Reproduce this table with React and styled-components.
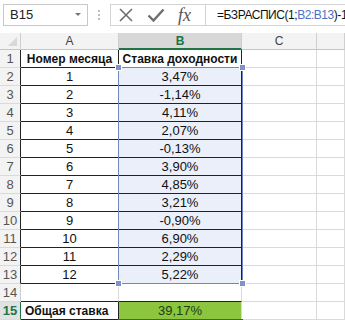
import React from 'react';
import styled, { createGlobalStyle } from 'styled-components';

const GlobalStyle = createGlobalStyle`
  html, body {
    margin: 0;
    padding: 0;
    background: #fff;
    overflow: hidden;
  }
  body {
    font-family: "Liberation Sans", Arial, sans-serif;
  }
`;

const Page = styled.div`
  width: 345px;
  height: 320px;
  overflow: hidden;
`;

const FormulaBar = styled.div`
  display: flex;
  align-items: center;
  height: 28px;
  padding: 2px 0 1px 3px;
  box-sizing: border-box;
`;

const NameBox = styled.div`
  display: flex;
  align-items: center;
  justify-content: space-between;
  width: 85px;
  height: 22px;
  box-sizing: border-box;
  border: 1px solid #c8c8c8;
  padding: 0 6px 0 6px;
  font-size: 13px;
  color: #222;
`;

const Caret = styled.span`
  width: 0;
  height: 0;
  border-left: 3px solid transparent;
  border-right: 3px solid transparent;
  border-top: 3px solid #777;
`;

const Dots = styled.div`
  display: flex;
  flex-direction: column;
  gap: 2px;
  margin: 0 10px 0 10px;
  span {
    width: 2px;
    height: 2px;
    background: #bdbdbd;
  }
`;

const ButtonGroup = styled.div`
  display: flex;
  align-items: center;
  gap: 13px;
  height: 22px;
  box-sizing: border-box;
  border: 1px solid #d4d4d4;
  border-right: none;
  padding: 0 8px 0 7px;
  width: 95px;
`;

const Fx = styled.span`
  font-family: "Liberation Serif", "Times New Roman", serif;
  font-style: italic;
  font-size: 18px;
  color: #555;
  line-height: 1;
`;

const FormulaInput = styled.div`
  flex: 1;
  min-width: 0;
  height: 22px;
  box-sizing: border-box;
  border: 1px solid #d4d4d4;
  border-right: none;
  display: flex;
  align-items: center;
  padding-left: 11px;
  font-size: 12px;
  letter-spacing: -0.45px;
  color: #111;
  white-space: nowrap;
  overflow: hidden;
`;

const Ref = styled.span`
  color: #4a72c4;
`;

const Sheet = styled.div`
  position: relative;
  margin-top: 5px;
  display: grid;
  grid-template-columns: 21px 98px 123px 75px 1fr;
  grid-template-rows: 17px repeat(15, 18px);
`;

const Cell = styled.div`
  box-sizing: border-box;
  display: flex;
  align-items: center;
  justify-content: ${(p) => p.$align || 'center'};
  padding: 0 ${(p) => (p.$align === 'flex-start' ? '4px' : '0')};
  font-size: ${(p) => (p.$bold ? '12px' : '13px')};
  font-weight: ${(p) => (p.$bold ? 700 : 400)};
  color: ${(p) => p.$color || '#111'};
  background: ${(p) => p.$bg || '#fff'};
  border-right: 1px solid ${(p) => p.$right || '#dadada'};
  border-bottom: 1px solid ${(p) => p.$bottom || '#dadada'};
  white-space: nowrap;
  overflow: hidden;
`;

const ColHead = styled.div`
  box-sizing: border-box;
  display: flex;
  align-items: center;
  justify-content: center;
  font-size: 12px;
  color: ${(p) => (p.$active ? '#217346' : '#444')};
  font-weight: ${(p) => (p.$active ? 700 : 400)};
  background: ${(p) => (p.$active ? '#d8d8d8' : '#f3f3f3')};
  border-right: 1px solid #cfcfcf;
  border-bottom: ${(p) => (p.$active ? '2px solid #217346' : '1px solid #c4c4c4')};
`;

const Corner = styled.div`
  position: relative;
  background: #f3f3f3;
  box-sizing: border-box;
  border-right: 1px solid #cfcfcf;
  border-bottom: 1px solid #c4c4c4;
  &::after {
    content: '';
    position: absolute;
    right: 3px;
    bottom: 3px;
    border-left: 9px solid transparent;
    border-bottom: 9px solid #d8d8d8;
  }
`;

const RowHead = styled.div`
  box-sizing: border-box;
  display: flex;
  align-items: center;
  justify-content: center;
  font-size: 13px;
  color: ${(p) => (p.$active ? '#217346' : '#555')};
  font-weight: ${(p) => (p.$active ? 700 : 400)};
  background: ${(p) => (p.$active ? '#e1e1e1' : '#f3f3f3')};
  border-right: 1px solid ${(p) => (p.$active ? '#217346' : p.$edge ? '#222' : '#cfcfcf')};
  border-bottom: 1px solid #dadada;
`;

const Selection = styled.div`
  position: absolute;
  left: 118px;
  top: 34px;
  width: 125px;
  height: 217px;
  box-sizing: border-box;
  border: 1px solid #6f88c4;
  pointer-events: none;
`;

const Handle = styled.span`
  position: absolute;
  width: 5px;
  height: 5px;
  background: #7d93c9;
  border: 1px solid #fff;
  ${(p) => (p.$top ? 'top: -4px;' : 'bottom: -4px;')}
  ${(p) => (p.$left ? 'left: -4px;' : 'right: -4px;')}
`;

const Active = styled.div`
  position: absolute;
  left: 118px;
  top: 286px;
  width: 125px;
  height: 20px;
  box-sizing: border-box;
  border: 2px solid #217346;
  pointer-events: none;
  &::after {
    content: '';
    position: absolute;
    right: -4px;
    bottom: -4px;
    width: 5px;
    height: 5px;
    background: #217346;
    border: 1px solid #fff;
  }
`;

const rates = ['3,47%', '-1,14%', '4,11%', '2,07%', '-0,13%', '3,90%', '4,85%', '3,21%', '-0,90%', '6,90%', '2,29%', '5,22%'];

const XIcon = () => (
  <svg width="16" height="16" viewBox="0 0 16 16">
    <path d="M2 2 L14 14 M14 2 L2 14" stroke="#6e6e6e" strokeWidth="1.6" fill="none" />
  </svg>
);

const CheckIcon = () => (
  <svg width="18" height="16" viewBox="0 0 18 16">
    <path d="M1.5 8.5 L6.5 13.5 L16.5 2.5" stroke="#6e6e6e" strokeWidth="2.4" fill="none" />
  </svg>
);

export default function App() {
  return (
    <Page>
      <GlobalStyle />
      <FormulaBar>
        <NameBox>
          B15
          <Caret />
        </NameBox>
        <Dots>
          <span />
          <span />
          <span />
        </Dots>
        <ButtonGroup>
          <XIcon />
          <CheckIcon />
          <Fx>fx</Fx>
        </ButtonGroup>
        <FormulaInput>
          =БЗРАСПИС(1;<Ref>B2:B13</Ref>)-1
        </FormulaInput>
      </FormulaBar>

      <Sheet>
        <Corner />
        <ColHead>A</ColHead>
        <ColHead $active>B</ColHead>
        <ColHead>C</ColHead>
        <ColHead />

        <RowHead $edge>1</RowHead>
        <Cell $bold $bottom="#222" $right="#222">Номер месяца</Cell>
        <Cell $bold $bottom="#222" $right="#222">Ставка доходности</Cell>
        <Cell />
        <Cell />

        {rates.map((r, i) => (
          <React.Fragment key={i}>
            <RowHead $edge>{i + 2}</RowHead>
            <Cell $bottom="#222" $right="#222">{i + 1}</Cell>
            <Cell $bg="#eaeff9" $bottom="#222" $right="#222">{r}</Cell>
            <Cell />
            <Cell />
          </React.Fragment>
        ))}

        <RowHead>14</RowHead>
        <Cell $bottom="#222" />
        <Cell $bottom="#222" />
        <Cell />
        <Cell />

        <RowHead $active>15</RowHead>
        <Cell $bold $align="flex-start" $right="#222" $bottom="#222">Общая ставка</Cell>
        <Cell $bg="#8cc63f" $color="#1d3d12">39,17%</Cell>
        <Cell />
        <Cell />

        <Selection>
          <Handle $top $left />
          <Handle $top />
          <Handle $left />
          <Handle />
        </Selection>
        <Active />
      </Sheet>
    </Page>
  );
}
